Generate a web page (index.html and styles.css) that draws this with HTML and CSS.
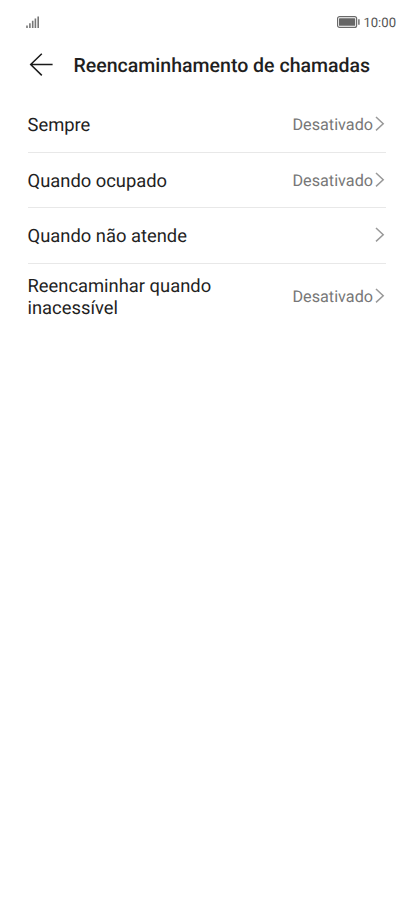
FILE: index.html
```html
<!DOCTYPE html>
<html lang="pt">
<head>
<meta charset="utf-8">
<title>Reencaminhamento de chamadas</title>
<link rel="stylesheet" href="styles.css">
</head>
<body>
<div class="status">
  <svg class="signal" width="14" height="14" viewBox="0 0 14 14"><path d="M1 10.5V13M3.9 8.3V13M6.7 5.8V13M9.4 3.6V13M12.2 1.4V13"/></svg>
  <div class="status-right">
    <svg class="battery" width="24" height="12" viewBox="0 0 24 12"><rect class="shell" x=".6" y=".6" width="19" height="10.8" rx="2"/><rect class="fill" x="2" y="2.2" width="16.2" height="7.6" rx=".6"/><path class="fill" d="M21.2 3.3h1.4v5.4h-1.4z"/></svg>
    <span class="time">10:00</span>
  </div>
</div>
<header class="header">
  <svg class="back" width="24" height="24" viewBox="0 0 24 24"><path d="M23.6 11.5H1.7M12.8 .7L1.7 11.5L12.8 22.4"/></svg>
  <h1>Reencaminhamento de chamadas</h1>
</header>
<main class="list">
  <div class="row"><span class="label">Sempre</span><span class="value">Desativado</span><svg class="chev" viewBox="0 0 10 16"><path d="M1 1L8.2 7.7L1 14.4"/></svg></div>
  <div class="row"><span class="label">Quando ocupado</span><span class="value">Desativado</span><svg class="chev" viewBox="0 0 10 16"><path d="M1 1L8.2 7.7L1 14.4"/></svg></div>
  <div class="row"><span class="label">Quando não atende</span><svg class="chev" viewBox="0 0 10 16"><path d="M1 1L8.2 7.7L1 14.4"/></svg></div>
  <div class="row tall"><span class="label">Reencaminhar quando<br>inacessível</span><span class="value">Desativado</span><svg class="chev" viewBox="0 0 10 16"><path d="M1 1L8.2 7.7L1 14.4"/></svg></div>
</main>
</body>
</html>
```
FILE: styles.css
```css
body { margin: 0; background: #fff; color: #1f1f1f; font-family: Roboto, sans-serif; text-rendering: geometricPrecision; }
svg { display: block; flex: none; fill: none; }
.status { display: flex; align-items: center; justify-content: space-between; height: 44px; padding: 0 18px 0 26px; font-size: 13.1px; color: #555; }
.status-right { display: flex; align-items: center; gap: 2.6px; }
.time { padding-top: 3px; line-height: 15px; }
.signal { stroke: #777; stroke-width: 1.6; }
.shell { stroke: #6a6a6a; stroke-width: 1.2; }
.fill { fill: #666; }
.header { display: flex; align-items: center; height: 42px; padding-left: 29px; gap: 20.5px; }
.back { stroke: #1a1a1a; stroke-width: 1.5; }
h1 { margin: 0; padding-top: 2px; font-size: 19.55px; font-weight: 500; line-height: 24px; white-space: nowrap; }
.list { margin: 11px 28px 0 27.5px; }
.row { display: flex; align-items: center; height: 54.6px; border-bottom: 1px solid #e8e8e8; }
.label { flex: 1; padding-top: 4px; font-size: 18.38px; line-height: 22px; }
.value { padding-top: 2px; font-size: 16.2px; line-height: 20px; color: #777; }
.chev { width: 10px; height: 16px; margin: 0 1.5px; stroke: #999; stroke-width: 1.5; }
.tall { height: 65px; border-bottom: 0; }
```
